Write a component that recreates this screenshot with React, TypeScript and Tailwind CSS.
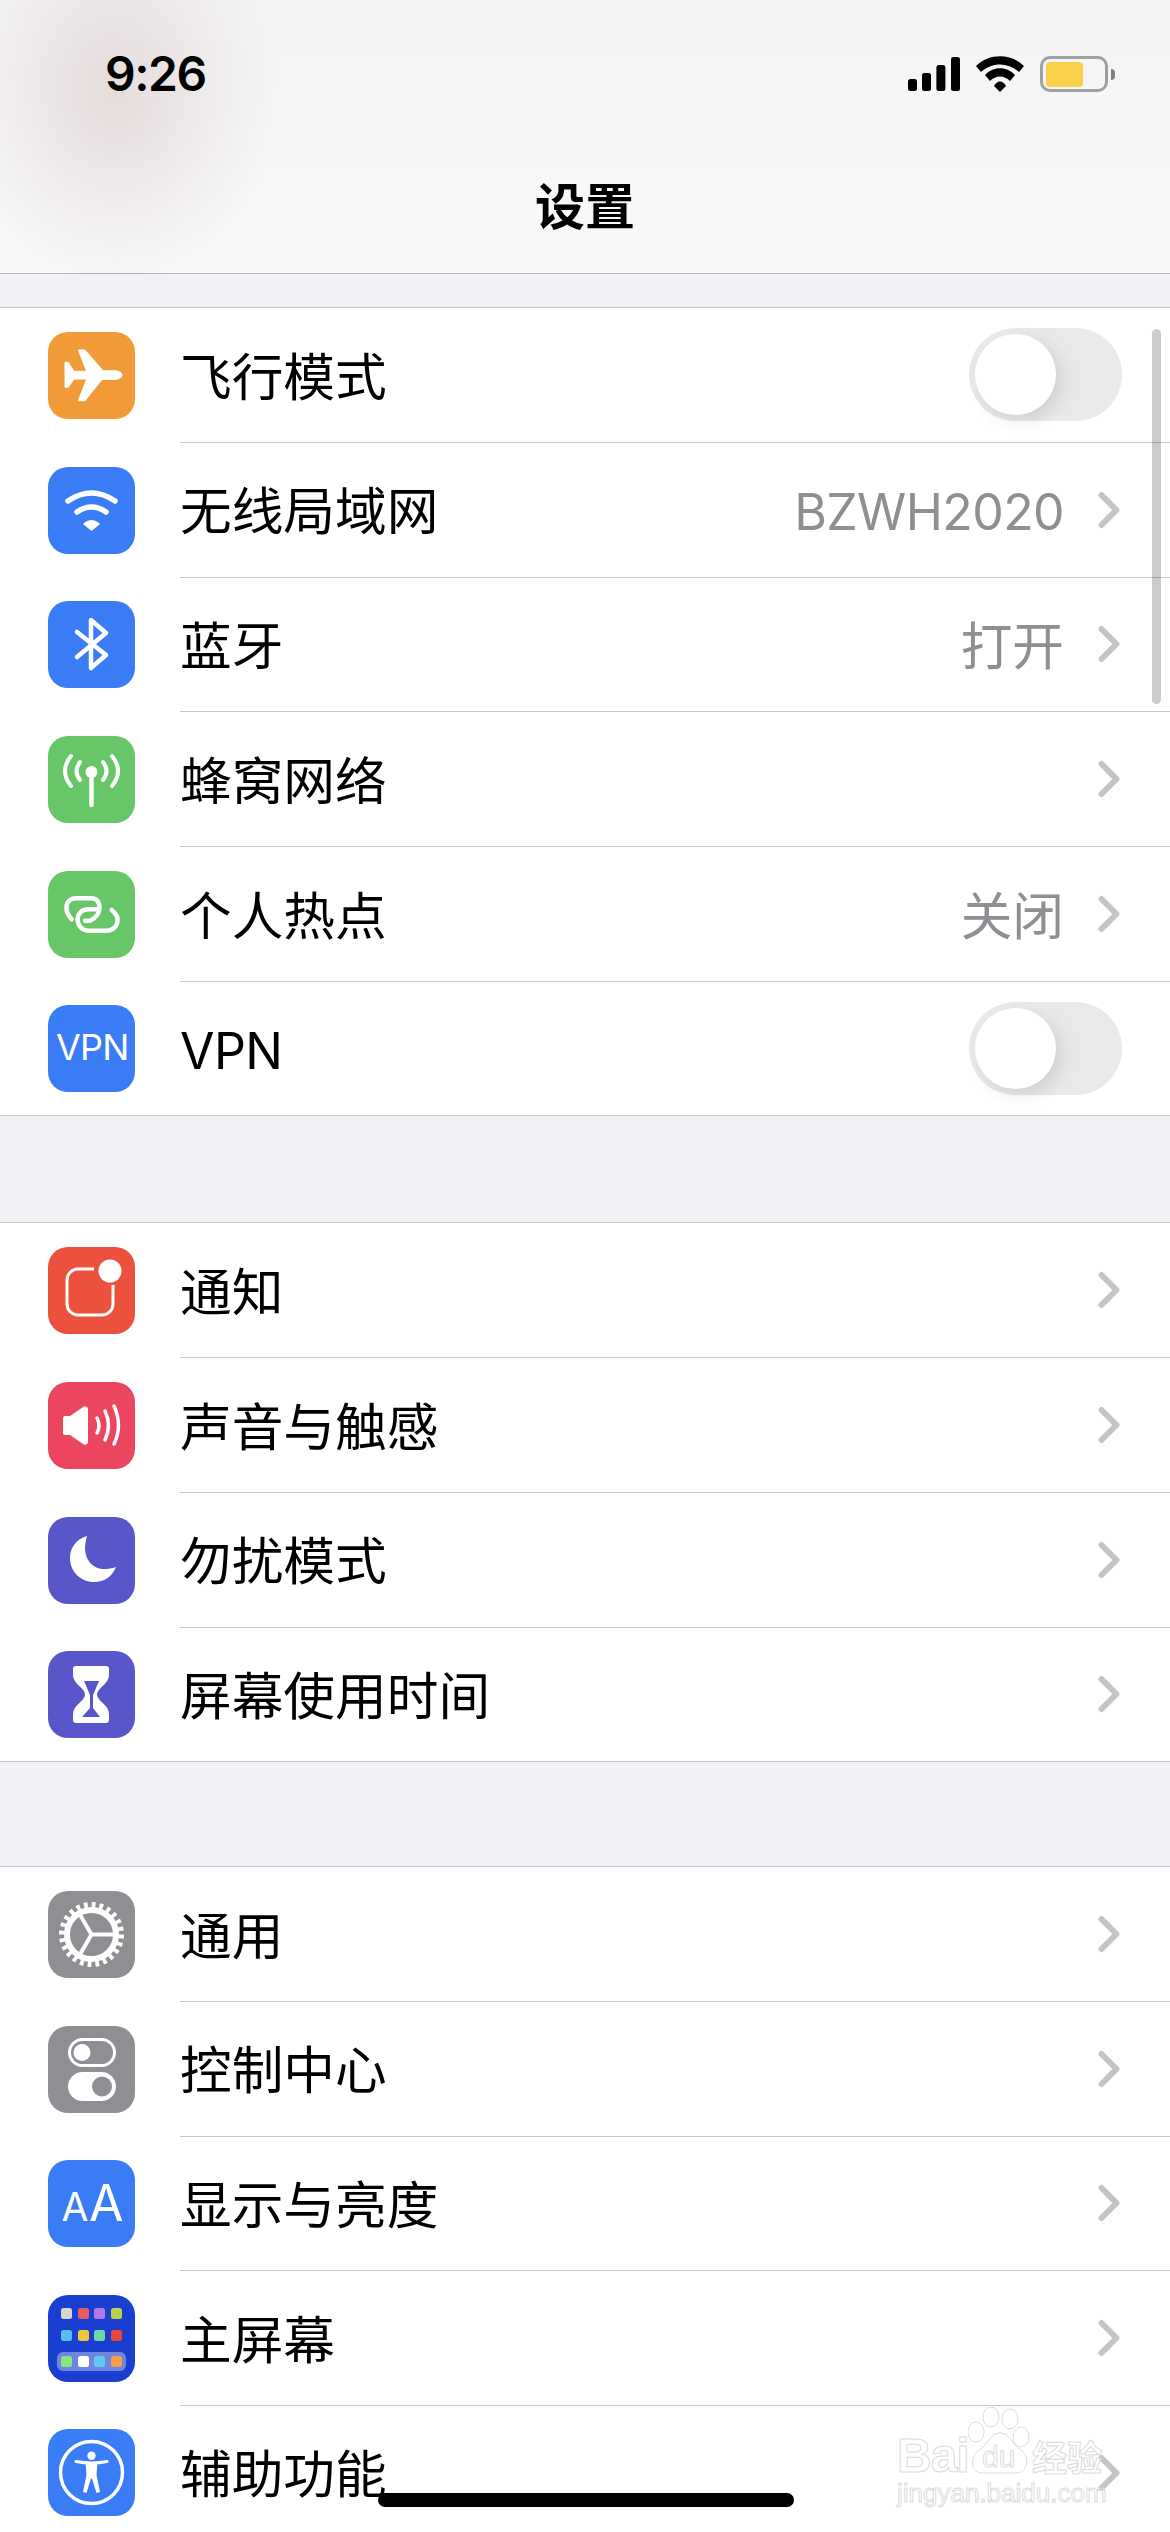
import type { ReactNode } from "react";

const svgProps = { viewBox: "0 0 87 87", className: "w-full h-full", fill: "none" };

function AirplaneIcon() {
  return (
    <svg {...svgProps}>
      <path
        d="M74 43 C74 40 70 38.7 66 38.7 H55 L37 18 H30.3 L38.7 39.3 H26 L20.3 30.3 H17 V55.3 H20.3 L26 47 H38.7 L30.3 68.7 H37 L54 47.5 H66 C70 47.5 74 46 74 43 Z"
        fill="white"
        stroke="white"
        strokeWidth="1"
        strokeLinejoin="round"
      />
    </svg>
  );
}

function WifiIcon() {
  return (
    <svg {...svgProps}>
      <path d="M20 34 Q43.5 18 67 34" stroke="white" strokeWidth="5.5" strokeLinecap="round" />
      <path d="M29 45 Q43.5 35 58 45" stroke="white" strokeWidth="5.5" strokeLinecap="round" />
      <path d="M35 57 Q43.5 49 52 57 L43.5 64 Z" fill="white" />
    </svg>
  );
}

function BluetoothIcon() {
  return (
    <svg {...svgProps}>
      <path
        d="M29 31 L58 54 L43 67 V19 L58 32 L29 56"
        stroke="white"
        strokeWidth="4.5"
        strokeLinecap="round"
        strokeLinejoin="round"
      />
    </svg>
  );
}

function CellularIcon() {
  return (
    <svg {...svgProps}>
      <circle cx="43.5" cy="36" r="6" fill="white" />
      <path d="M43.5 38 V69" stroke="white" strokeWidth="4.5" strokeLinecap="round" />
      <g stroke="white" strokeWidth="4" strokeLinecap="round">
        <path d="M23 20 Q11 35 23 50" />
        <path d="M32 26 Q25 35 32 44" />
        <path d="M64 20 Q76 35 64 50" />
        <path d="M55 26 Q62 35 55 44" />
      </g>
    </svg>
  );
}

function HotspotIcon() {
  return (
    <svg {...svgProps}>
      <g stroke="white" strokeWidth="4.5" strokeLinecap="round">
        <path d="M23.7 48.3 C15.3 39 17 27.3 28.7 27.3 H43.7 C53.7 27.3 55.3 44 42 49.7 H37" />
        <path d="M63.7 39 C73.7 47 70.3 59.7 57 59.7 H40.3 C27 59.7 25.3 38.3 40.3 38.3 H48.7" />
      </g>
    </svg>
  );
}

function VpnIcon() {
  return (
    <svg {...svgProps}>
      <text x="8" y="55" fill="white" fontFamily="Inter, sans-serif" fontSize="36" letterSpacing="-0.8">
        VPN
      </text>
    </svg>
  );
}

function NotificationIcon() {
  return (
    <svg {...svgProps}>
      <path
        d="M46 22 H30 a11 11 0 0 0 -11 11 V57 a11 11 0 0 0 11 11 H54 a11 11 0 0 0 11 -11 V38"
        stroke="white"
        strokeWidth="3"
      />
      <circle cx="62" cy="24" r="11.5" fill="white" />
    </svg>
  );
}

function SoundIcon() {
  return (
    <svg {...svgProps}>
      <path
        d="M15 36 a2 2 0 0 1 2 -2 H22 L35 25 a3 3 0 0 1 5 2 V60 a3 3 0 0 1 -5 2 L22 53 H17 a2 2 0 0 1 -2 -2 Z"
        fill="white"
      />
      <g stroke="white" strokeWidth="3.5" strokeLinecap="round">
        <path d="M49 36 Q53 43.5 49 51" />
        <path d="M57 29 Q64 43.5 57 58" />
        <path d="M66 24 Q75 43.5 66 62" />
      </g>
    </svg>
  );
}

function MoonIcon() {
  return (
    <svg {...svgProps}>
      <path
        d="M39 19 C28 22 22 31 22 41 C22 55 33 65 46 65 C56 65 64 60 68 50 C64 51.5 60 52 56 52 C44 52 37 42 37 31 C37 27 38 23 39 19 Z"
        fill="white"
      />
    </svg>
  );
}

function HourglassIcon() {
  return (
    <svg {...svgProps}>
      <path
        d="M28 15 H58 a3 3 0 0 1 3 3 V24 C61 33 49 37 49 43.5 C49 50 61 54 61 63 V69 a3 3 0 0 1 -3 3 H28 a3 3 0 0 1 -3 -3 V63 C25 54 37 50 37 43.5 C37 37 25 33 25 24 V18 a3 3 0 0 1 3 -3 Z"
        fill="white"
      />
      <path d="M36 30 H51 L45 44 V57 L52 66 H34 L42 57 V44 Z" fill="#5856c8" />
    </svg>
  );
}

function GearIcon() {
  return (
    <svg {...svgProps}>
      <circle cx="43.5" cy="43.5" r="29.5" stroke="white" strokeWidth="6" strokeDasharray="3.8 3.92" />
      <circle cx="43.5" cy="43.5" r="24.5" stroke="white" strokeWidth="6" />
      <path d="M43.5 43.5 H66 M43.5 43.5 L31 22 M43.5 43.5 L31 65" stroke="white" strokeWidth="4" />
    </svg>
  );
}

function ControlIcon() {
  return (
    <svg {...svgProps}>
      <rect x="21.5" y="13.5" width="45" height="26" rx="13" stroke="white" strokeWidth="3" />
      <circle cx="34" cy="26.5" r="8.5" fill="white" />
      <rect x="20" y="46" width="48" height="29" rx="14.5" fill="white" />
      <circle cx="54" cy="60.5" r="10" fill="#8e8e93" />
    </svg>
  );
}

function TextSizeIcon() {
  return (
    <svg {...svgProps}>
      <text x="13.5" y="61" fill="white" fontFamily="Inter, sans-serif" fontSize="39">
        A
      </text>
      <text x="41" y="61" fill="white" fontFamily="Inter, sans-serif" fontSize="50">
        A
      </text>
    </svg>
  );
}

function HomeScreenIcon() {
  const xs = [13, 30, 46, 63];
  const rows = [
    { y: 13, colors: ["#d6d6d0", "#ea5a66", "#ae7bec", "#b9d34a"] },
    { y: 35, colors: ["#5bbcf5", "#f6c33f", "#6fd6a6", "#e8473c"] },
  ];
  const dock = ["#86e67f", "#ffffff", "#5fc8f7", "#f3a04c"];
  return (
    <svg {...svgProps}>
      {rows.map((row) =>
        row.colors.map((c, i) => <rect key={c} x={xs[i]} y={row.y} width="11" height="11" rx="2.5" fill={c} />)
      )}
      <rect x="9" y="57" width="69" height="19" rx="6" fill="#6f86dc" />
      {dock.map((c, i) => (
        <rect key={c} x={xs[i]} y="61" width="11" height="11" rx="2.5" fill={c} />
      ))}
    </svg>
  );
}

function AccessibilityIcon() {
  return (
    <svg {...svgProps}>
      <circle cx="43.5" cy="43.5" r="31" stroke="white" strokeWidth="3.5" />
      <circle cx="43.5" cy="26.7" r="4.2" fill="white" />
      <path d="M28 32.5 Q43.5 35.5 59 32.5" stroke="white" strokeWidth="3" strokeLinecap="round" />
      <path d="M37.5 33 H49.5 L48.5 46 L52 63 L48.5 64 L44 49.5 H43 L38.5 64 L35 63 L38.5 46 Z" fill="white" />
    </svg>
  );
}

function Chevron() {
  return (
    <svg viewBox="0 0 24 38" className="w-[24px] h-[38px] shrink-0">
      <path
        d="M4.5 4 L19.5 19 L4.5 34"
        fill="none"
        stroke="#c4c4c7"
        strokeWidth="6"
        strokeLinecap="round"
        strokeLinejoin="round"
      />
    </svg>
  );
}

function Toggle() {
  return (
    <div className="w-[153px] h-[93px] rounded-full bg-[#e9e9ea] p-[6px] shrink-0">
      <div className="w-[81px] h-[81px] rounded-full bg-white shadow-[6px_6px_16px_rgba(0,0,0,0.1)]" />
    </div>
  );
}

type RowData = {
  label: string;
  color: string;
  icon: ReactNode;
  value?: string;
  toggle?: boolean;
  latin?: boolean;
};

const groupOne: RowData[] = [
  { label: "飞行模式", color: "bg-[#f19c38]", icon: <AirplaneIcon />, toggle: true },
  { label: "无线局域网", color: "bg-[#3a7bf6]", icon: <WifiIcon />, value: "BZWH2020", latin: true },
  { label: "蓝牙", color: "bg-[#3a7bf6]", icon: <BluetoothIcon />, value: "打开" },
  { label: "蜂窝网络", color: "bg-[#67c667]", icon: <CellularIcon /> },
  { label: "个人热点", color: "bg-[#67c667]", icon: <HotspotIcon />, value: "关闭" },
  { label: "VPN", color: "bg-[#3a7bf6]", icon: <VpnIcon />, toggle: true, latin: true },
];

const groupTwo: RowData[] = [
  { label: "通知", color: "bg-[#ec513e]", icon: <NotificationIcon /> },
  { label: "声音与触感", color: "bg-[#ec4560]", icon: <SoundIcon /> },
  { label: "勿扰模式", color: "bg-[#5856c8]", icon: <MoonIcon /> },
  { label: "屏幕使用时间", color: "bg-[#5856c8]", icon: <HourglassIcon /> },
];

const groupThree: RowData[] = [
  { label: "通用", color: "bg-[#8e8e93]", icon: <GearIcon /> },
  { label: "控制中心", color: "bg-[#8e8e93]", icon: <ControlIcon /> },
  { label: "显示与亮度", color: "bg-[#3a7bf6]", icon: <TextSizeIcon /> },
  { label: "主屏幕", color: "bg-[#1a3fd0]", icon: <HomeScreenIcon /> },
  { label: "辅助功能", color: "bg-[#3a7bf6]", icon: <AccessibilityIcon /> },
];

function Row({ row, last }: { row: RowData; last: boolean }) {
  const latinText = "text-[50px] tracking-[-0.6px]";
  return (
    <div className={`flex items-center pl-[48px] ${last ? "h-[133.3px]" : "h-[134.8px]"}`}>
      <div className={`w-[87px] h-[87px] rounded-[20px] shrink-0 ${row.color}`}>{row.icon}</div>
      <div
        className={`flex-1 h-full ml-[45px] flex items-center justify-between pr-[48px] ${
          last ? "" : "border-b-[1.5px] border-[#c8c8cb]"
        }`}
      >
        <span className={`pt-[5px] leading-none text-black ${row.label === "VPN" ? latinText : "text-[51.7px]"}`}>
          {row.label}
        </span>
        {row.toggle ? (
          <Toggle />
        ) : (
          <div className="flex items-center gap-[33px] mr-[1px]">
            {row.value && (
              <span className={`pt-[5px] leading-none text-[#8e8e93] ${row.latin ? latinText : "text-[51.7px]"}`}>
                {row.value}
              </span>
            )}
            <Chevron />
          </div>
        )}
      </div>
    </div>
  );
}

function Group({ rows }: { rows: RowData[] }) {
  return (
    <div className="bg-white border-y-[1.5px] border-[#c8c8cb]">
      {rows.map((row, i) => (
        <Row key={row.label} row={row} last={i === rows.length - 1} />
      ))}
    </div>
  );
}

function StatusIcons() {
  return (
    <div className="flex items-center gap-[16px]">
      {/* signal */}
      <svg viewBox="0 0 52 34" className="w-[52px] h-[34px]">
        <rect x="0" y="22" width="9" height="12" rx="2.5" fill="black" />
        <rect x="14" y="16" width="9" height="18" rx="2.5" fill="black" />
        <rect x="28.4" y="8" width="9" height="26" rx="2.5" fill="black" />
        <rect x="43" y="0" width="9" height="34" rx="2.5" fill="black" />
      </svg>
      {/* wifi */}
      <svg viewBox="0 0 48 36" className="w-[48px] h-[36px]">
        <path d="M0 10 C13 -3 35 -3 48 10 L43 16 C32 6 16 6 5 16 Z" fill="black" />
        <path d="M9 19 C17 10 31 10 39 19 L34 25 C28 19 20 19 14 25 Z" fill="black" />
        <path d="M18 30 C21 24 27 24 30 30 L24 36 Z" fill="black" />
      </svg>
      {/* battery */}
      <div className="flex items-center gap-[3px]">
        <div className="w-[68px] h-[36px] rounded-[10px] border-[3.5px] border-[#a0a0a0] p-[2.5px] flex">
          <div className="w-[37px] h-full rounded-[4px] bg-[#f8d04a]" />
        </div>
        <div className="w-[4px] h-[11px] rounded-r-full bg-[#808080]" />
      </div>
    </div>
  );
}

function Watermark() {
  const outline = "text-transparent [-webkit-text-stroke:1px_#dcdcdc] [font-family:'Liberation_Sans',sans-serif]";
  return (
    <div className="absolute left-[897px] top-[2405px] w-[215px] h-[105px]">
      <svg viewBox="0 0 62 68" className="absolute left-[71px] top-[2px] w-[62px] h-[68px]" fill="none" stroke="#dcdcdc" strokeWidth="1">
        <ellipse cx="8" cy="25" rx="8" ry="10" />
        <ellipse cx="23" cy="10" rx="8" ry="10" />
        <ellipse cx="42" cy="12" rx="8" ry="10" />
        <ellipse cx="53" cy="30" rx="8" ry="10" />
        <path d="M32 26 C22 26 20 38 10 44 C2 50 2 66 15 66 H48 C60 66 62 50 54 44 C44 38 42 26 32 26 Z" />
      </svg>
      <span className={`absolute left-0 top-[28px] text-[48px] font-bold tracking-[-1px] leading-[46px] ${outline}`}>Bai</span>
      <span className={`absolute left-[85px] top-[37px] text-[30px] leading-none ${outline}`}>du</span>
      <span className="absolute left-[135px] top-[33px] text-[35px] font-bold leading-none whitespace-nowrap text-white [-webkit-text-stroke:1px_#dcdcdc] [font-family:'Noto_Sans_CJK_SC',sans-serif]">
        经验
      </span>
      <span className={`absolute left-0 top-[75px] text-[26px] leading-none whitespace-nowrap ${outline}`}>
        jingyan.baidu.com
      </span>
    </div>
  );
}

export default function App() {
  return (
    <div className="relative w-[1170px] h-[2532px] overflow-hidden bg-[#f1f1f6] [font-family:Inter,'Noto_Sans_CJK_SC',sans-serif]">
      <header className="relative h-[274px] bg-[linear-gradient(to_bottom,#f4f4f5,#f9f9f9)] border-b-[1.5px] border-[#b4b4b6] overflow-hidden">
        <div className="absolute -left-[50px] -top-[110px] w-[330px] h-[400px] bg-[radial-gradient(closest-side,#e6dcdc,rgba(230,220,220,0))]" />
        <div className="relative flex items-center justify-between pl-[105px] pr-[55px] pt-[55px]">
          <span className="text-[48px] leading-[38px] font-semibold tracking-[-1.5px] text-black">9:26</span>
          <StatusIcons />
        </div>
        <h1 className="relative mt-[89px] text-center text-[50px] leading-[50px] font-semibold text-black">设置</h1>
      </header>

      <div className="h-[33px]" />
      <Group rows={groupOne} />
      <div className="h-[106px]" />
      <Group rows={groupTwo} />
      <div className="h-[104px]" />
      <Group rows={groupThree} />

      {/* scroll indicator */}
      <div className="absolute left-[1152px] top-[329px] w-[9px] h-[375px] rounded-full bg-black/20" />
      <Watermark />
      {/* home indicator */}
      <div className="absolute left-[378px] top-[2493px] w-[416px] h-[14px] rounded-full bg-black" />
    </div>
  );
}
